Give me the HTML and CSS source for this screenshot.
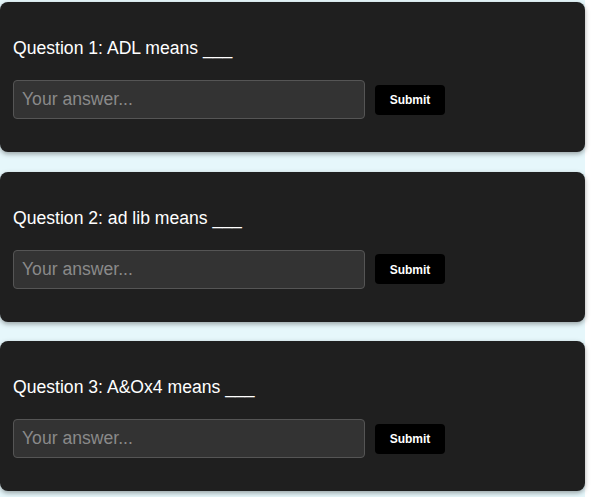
FILE: index.html
```html
<!DOCTYPE html>
<html lang="en">
<head>
<meta charset="utf-8">
<title>Quiz</title>
<link rel="stylesheet" href="styles.css">
</head>
<body>
<main class="quiz">
  <section class="card">
    <p class="question">Question 1: ADL means ___</p>
    <div class="answer-row">
      <input class="answer" type="text" placeholder="Your answer...">
      <button class="submit" type="button">Submit</button>
    </div>
  </section>
  <section class="card">
    <p class="question">Question 2: ad lib means ___</p>
    <div class="answer-row">
      <input class="answer" type="text" placeholder="Your answer...">
      <button class="submit" type="button">Submit</button>
    </div>
  </section>
  <section class="card">
    <p class="question">Question 3: A&amp;Ox4 means ___</p>
    <div class="answer-row">
      <input class="answer" type="text" placeholder="Your answer...">
      <button class="submit" type="button">Submit</button>
    </div>
  </section>
</main>
</body>
</html>
```
FILE: styles.css
```css
html, body {
  margin: 0;
  padding: 0;
  background: #ffffff;
  font-family: "Liberation Sans", Arial, sans-serif;
}

.quiz {
  width: 585px;
  min-height: 497px;
  background: #e6f7fb;
  padding-top: 2px;
  box-sizing: border-box;
  display: flex;
  flex-direction: column;
  gap: 19.5px;
}

.card {
  background: #1f1f1f;
  border-radius: 8px;
  box-shadow: 0 2px 5px rgba(0, 0, 0, 0.35);
  padding: 36px 13px 33px 13px;
  height: 150px;
  box-sizing: border-box;
}

.question {
  margin: 0 0 22px 0;
  color: #ffffff;
  font-size: 17.6px;
  line-height: 20px;
}

.answer-row {
  display: flex;
  align-items: center;
  gap: 10px;
}

.answer {
  width: 352px;
  height: 39px;
  box-sizing: border-box;
  background: #333333;
  border: 1px solid #555555;
  border-radius: 4px;
  padding: 0 8px;
  color: #ffffff;
  font-family: "Liberation Sans", Arial, sans-serif;
  font-size: 17.6px;
  outline: none;
}

.answer::placeholder {
  color: #8a8a8a;
}

.submit {
  width: 70px;
  height: 30px;
  background: #000000;
  color: #ffffff;
  border: none;
  border-radius: 4px;
  font-family: "Liberation Sans", Arial, sans-serif;
  font-weight: bold;
  font-size: 12px;
  padding: 1px 0 0 0;
}
```
